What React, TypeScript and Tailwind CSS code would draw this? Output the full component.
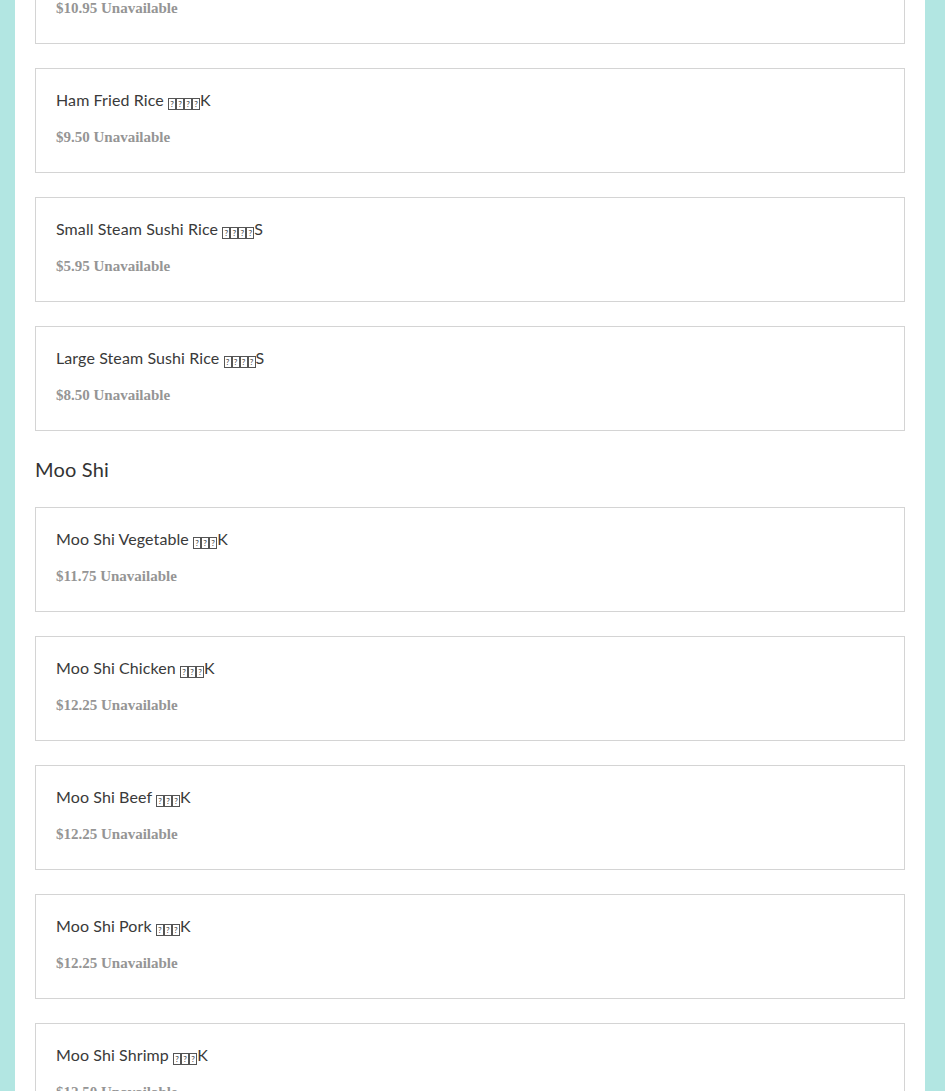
import React from "react";

const Tofu = ({ n }: { n: number }) => (
  <span className="inline-flex items-center align-[-1px]">
    {Array.from({ length: n }).map((_, i) => (
      <span
        key={i}
        className="inline-flex h-[12px] w-[8px] items-center justify-center border border-[#555] text-[8px] leading-none"
      >
        ?
      </span>
    ))}
  </span>
);

type Item = { name: string; n: number; suffix: string; price: string };

const Card = ({ item, first }: { item: Item; first?: boolean }) => (
  <div
    className={`h-[105px] shrink-0 border border-[#d4d4d4] bg-white px-5 pt-[21px] ${first ? "-mt-[61px]" : ""}`}
  >
    <div
      className="h-5 text-[16px] leading-5 tracking-[0.1px] text-[#3a3a3a]"
      style={{ fontFamily: "Lato, 'Noto Sans', sans-serif" }}
    >
      {item.name} <Tofu n={item.n} />
      {item.suffix}
    </div>
    <div
      className="mt-[17px] h-5 text-[15px] font-bold leading-5 text-[#959595]"
      style={{ fontFamily: "'Liberation Serif', serif" }}
    >
      {item.price} Unavailable
    </div>
  </div>
);

const rice: Item[] = [
  { name: "Fried Rice", n: 4, suffix: "K", price: "$10.95" },
  { name: "Ham Fried Rice", n: 4, suffix: "K", price: "$9.50" },
  { name: "Small Steam Sushi Rice", n: 4, suffix: "S", price: "$5.95" },
  { name: "Large Steam Sushi Rice", n: 4, suffix: "S", price: "$8.50" },
];

const mooshi: Item[] = [
  { name: "Moo Shi Vegetable", n: 3, suffix: "K", price: "$11.75" },
  { name: "Moo Shi Chicken", n: 3, suffix: "K", price: "$12.25" },
  { name: "Moo Shi Beef", n: 3, suffix: "K", price: "$12.25" },
  { name: "Moo Shi Pork", n: 3, suffix: "K", price: "$12.25" },
  { name: "Moo Shi Shrimp", n: 3, suffix: "K", price: "$12.50" },
];

export default function App() {
  return (
    <div className="h-[1091px] overflow-hidden bg-[#b2e6e2] pl-[15px] pr-[20px]">
      <div className="h-full overflow-hidden bg-white px-5">
        <div className="flex flex-col gap-6">
          {rice.map((it, i) => (
            <Card key={i} item={it} first={i === 0} />
          ))}
          <div
            className="h-7 text-[20px] leading-7 tracking-[0.2px] text-[#333]"
            style={{ fontFamily: "Lato, 'Noto Sans', sans-serif" }}
          >
            Moo Shi
          </div>
          {mooshi.map((it, i) => (
            <Card key={i} item={it} />
          ))}
        </div>
      </div>
    </div>
  );
}
